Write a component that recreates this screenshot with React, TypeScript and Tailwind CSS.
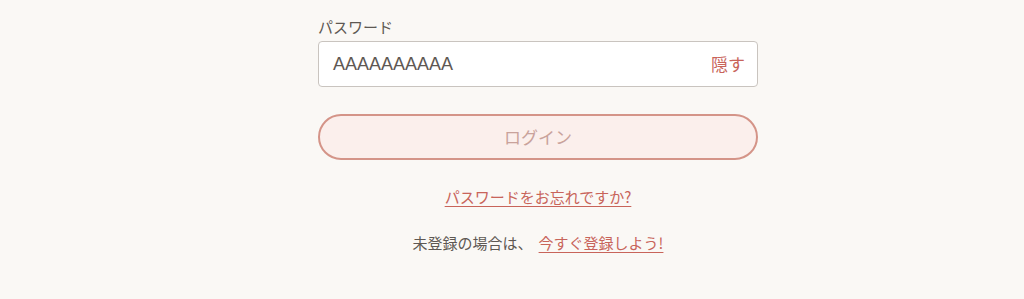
import React from 'react'

const font = { fontFamily: '"Noto Sans CJK JP", "Liberation Sans", sans-serif' }

export default function App() {
  return (
    <div className="min-h-[299px] bg-[#faf8f5] pl-[52px] flex justify-center" style={font}>
      <div className="w-[440px] pt-[16px]">
        <label className="block text-[15px] leading-[22px] text-[#5e5853] mb-[3px]">パスワード</label>
        <div className="flex items-center h-[46px] rounded-[4px] border border-[#c9c4bf] bg-white pl-[14px] pr-[12px]">
          <span className="flex-1 font-['Liberation_Sans',sans-serif] text-[18px] text-[#5e5853]">AAAAAAAAAA</span>
          <button className="text-[17px] text-[#c8645a]">隠す</button>
        </div>
        <button className="mt-[27px] w-full h-[46px] rounded-full border-2 border-[#d49488] bg-[#fbefec] text-[17px] text-[#c9a29b]">
          ログイン
        </button>
        <div className="mt-[24px] text-center">
          <a href="#" className="text-[15px] text-[#c8645a] underline underline-offset-[3px]">
            パスワードをお忘れですか?
          </a>
        </div>
        <p className="mt-[23px] text-center text-[15px] text-[#5e5853]">
          未登録の場合は、
          <a href="#" className="ml-[6px] text-[#c8645a] underline underline-offset-[3px]">
            今すぐ登録しよう!
          </a>
        </p>
      </div>
    </div>
  )
}
